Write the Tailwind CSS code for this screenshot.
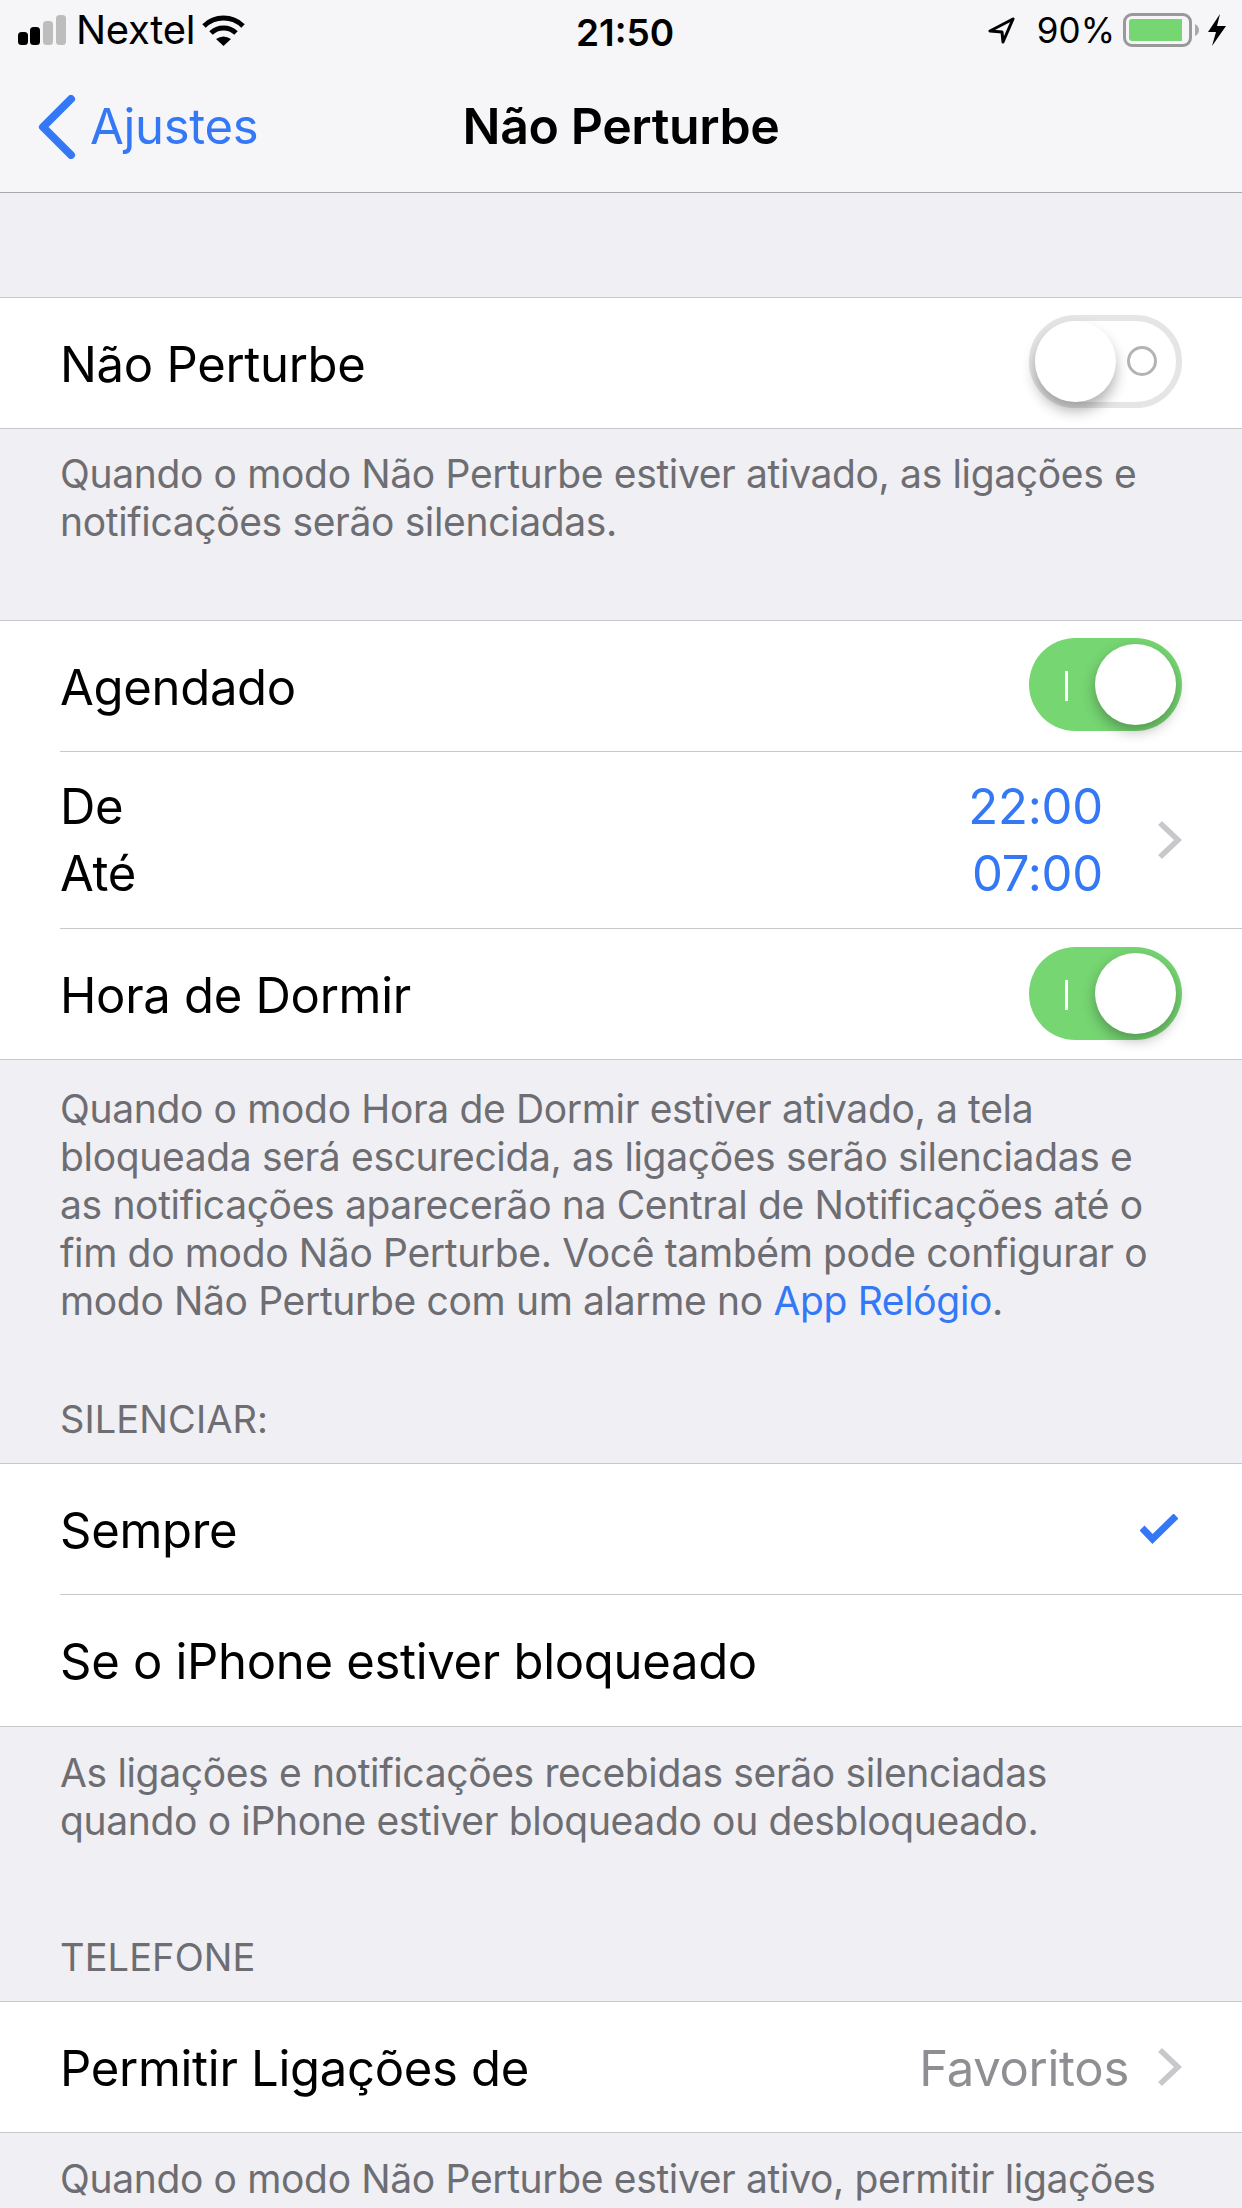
<!DOCTYPE html>
<html><head><meta charset="utf-8"><script src="https://cdn.jsdelivr.net/npm/@tailwindcss/browser@4"></script></head>
<body class="m-0">
<div class="w-[1242px] h-[2208px] overflow-hidden bg-[#efeff4] font-['Inter','Liberation_Sans',sans-serif] text-black text-[49px] tracking-[-0.3px]">
  <header class="h-[193px] bg-[#f6f6f9] border-b border-b-[#a9a9ad] flex flex-col">
    <div class="h-[60px] pl-[18px] pr-[16px] relative flex items-center justify-between text-[35px] tracking-normal">
      <div class="flex items-center">
        <svg width="48" height="30" viewBox="0 0 48 30"><rect x="0" y="17" width="10" height="13" rx="3.5" fill="#000"/><rect x="12" y="12" width="10" height="18" rx="3.5" fill="#000"/><rect x="25" y="6" width="10" height="24" rx="3.5" fill="#bdbdbd"/><rect x="38" y="0" width="10" height="30" rx="3.5" fill="#bdbdbd"/></svg>
        <span class="ml-[10px] text-[40px] tracking-[-0.3px]">Nextel</span>
        <svg class="ml-[7px]" width="43" height="31" viewBox="0 0 43 31"><path d="M2 11 A28 28 0 0 1 41 11" fill="none" stroke="#000" stroke-width="5"/><path d="M9 18 A18 18 0 0 1 34 18" fill="none" stroke="#000" stroke-width="5"/><path d="M14 24 Q21.500 19 29 24 L21.500 31 Z" fill="#000"/></svg>
      </div>
      <span class="absolute left-[576px] top-[5px] font-semibold text-[37px]">21:50</span>
      <div class="flex items-center">
        <svg width="27" height="27" viewBox="0 0 27 27"><path d="M25 2 L2 14 L14 15 L15 25 Z" fill="none" stroke="#000" stroke-width="3" stroke-linejoin="round"/></svg>
        <span class="ml-[22px]">90%</span>
        <div class="ml-[8px] w-[69px] h-[34px] border-[3px] border-[#999] rounded-[9px] p-[3px]"><div class="w-[53px] h-full bg-[#76d672] rounded-l-[3px]"></div></div>
        <svg class="ml-[3px]" width="4" height="12" viewBox="0 0 4 12"><path d="M0 0 Q4 2 4 6 Q4 10 0 12 Z" fill="#aaa"/></svg>
        <svg class="ml-[9px]" width="18" height="32" viewBox="0 0 18 32"><path d="M12 0 L0 18 L8 18 L4 32 L18 12 L9 12 Z" fill="#000"/></svg>
      </div>
    </div>
    <div class="flex-1 relative flex items-center justify-center pt-[1px]">
      <div class="absolute left-[38px] top-[30px] flex items-center text-[#3478f6]">
        <svg width="38" height="64" viewBox="0 0 38 64"><path d="M33 4 L5 32 L33 60" fill="none" stroke="#3478f6" stroke-width="8" stroke-linecap="round" stroke-linejoin="round"/></svg>
        <span class="ml-[14px]">Ajustes</span>
      </div>
      <span class="font-semibold text-[50px] tracking-[-0.4px]">Não Perturbe</span>
    </div>
  </header>
  <main class="pt-[104px]">
    <section class="bg-white border-y border-[#c8c7cc] h-[132px] pl-[60px] pr-[60px] flex items-center justify-between">
      <span class="mt-[3px]">Não Perturbe</span>
      <div class="relative -mt-[3px] w-[153px] h-[93px] rounded-full border-[6px] border-[#e5e5e5]">
        <div class="absolute left-[0px] top-[0px] w-[81px] h-[81px] rounded-full bg-white shadow-[0_9px_14px_rgba(0,0,0,0.3)]"></div>
        <div class="absolute left-[92px] top-[25px] w-[30px] h-[30px] rounded-full border-[3px] border-[#b3b3b3]"></div>
      </div>
    </section>
    <p class="pt-[21px] pl-[60px] text-[39px] leading-[48px] text-[#6d6d72] h-[191px] tracking-[-0.35px]">Quando o modo Não Perturbe estiver ativado, as ligações e<br>notificações serão silenciadas.</p>
    <section class="bg-white border-y border-[#c8c7cc]">
      <div class="h-[130px] pl-[60px] pr-[60px] flex items-center justify-between">
        <span class="mt-[3px]">Agendado</span>
        <div class="relative -mt-[3px] w-[153px] h-[93px] rounded-full bg-[#76d672]">
          <div class="absolute left-[36px] top-[33px] w-[3px] h-[30px] bg-white"></div>
          <div class="absolute left-[66px] top-[6px] w-[81px] h-[81px] rounded-full bg-white shadow-[0_6px_14px_rgba(0,0,0,0.3)]"></div>
        </div>
      </div>
      <div class="ml-[60px] h-[178px] border-y border-[#c8c7cc] pr-[60px] flex items-center justify-between">
        <div class="leading-[67px]"><div>De</div><div>Até</div></div>
        <div class="flex items-center">
          <div class="leading-[67px] text-right text-[#3478f6] mr-[55px] tracking-[-0.2px]"><div>22:00</div><div>07:00</div></div>
          <svg width="24" height="38" viewBox="0 0 24 38"><path d="M2 2 L20 19 L2 36" fill="none" stroke="#c7c7cc" stroke-width="5.500"/></svg>
        </div>
      </div>
      <div class="h-[130px] pl-[60px] pr-[60px] flex items-center justify-between">
        <span class="mt-[3px]">Hora de Dormir</span>
        <div class="relative -mt-[1px] w-[153px] h-[93px] rounded-full bg-[#76d672]">
          <div class="absolute left-[36px] top-[33px] w-[3px] h-[30px] bg-white"></div>
          <div class="absolute left-[66px] top-[6px] w-[81px] h-[81px] rounded-full bg-white shadow-[0_6px_14px_rgba(0,0,0,0.3)]"></div>
        </div>
      </div>
    </section>
    <p class="pt-[25px] pl-[60px] text-[39px] leading-[48px] text-[#6d6d72] tracking-[-0.35px]">Quando o modo Hora de Dormir estiver ativado, a tela<br>bloqueada será escurecida, as ligações serão silenciadas e<br>as notificações aparecerão na Central de Notificações até o<br>fim do modo Não Perturbe. Você também pode configurar o<br>modo Não Perturbe com um alarme no <span class="text-[#3478f6]">App Relógio</span>.</p>
    <div class="h-[138px] pt-[70px] pl-[60px] text-[38px] leading-[48px] text-[#6d6d72] tracking-[0.1px]">SILENCIAR:</div>
    <section class="bg-white border-y border-[#c8c7cc]">
      <div class="h-[130px] pl-[60px] pr-[64px] flex items-center justify-between">
        <span class="mt-[3px]">Sempre</span>
        <svg width="38" height="30" viewBox="0 0 38 30"><path d="M2 14 L12.500 25 L36 2" fill="none" stroke="#3478f6" stroke-width="7"/></svg>
      </div>
      <div class="ml-[60px] h-[132px] border-t border-[#c8c7cc] flex items-center"><span class="mt-[3px]">Se o iPhone estiver bloqueado</span></div>
    </section>
    <p class="pt-[22px] pl-[60px] text-[39px] leading-[48px] text-[#6d6d72] tracking-[-0.35px]">As ligações e notificações recebidas serão silenciadas<br>quando o iPhone estiver bloqueado ou desbloqueado.</p>
    <div class="h-[156px] pt-[88px] pl-[60px] text-[38px] leading-[48px] text-[#6d6d72] tracking-[0.1px]">TELEFONE</div>
    <section class="bg-white border-y border-[#c8c7cc] h-[132px] pl-[60px] pr-[60px] flex items-center justify-between">
      <span class="mt-[3px]">Permitir Ligações de</span>
      <div class="flex items-center">
        <span class="mt-[3px] text-[#8e8e93] mr-[29px]">Favoritos</span>
        <svg width="24" height="38" viewBox="0 0 24 38"><path d="M2 2 L20 19 L2 36" fill="none" stroke="#c7c7cc" stroke-width="5.500"/></svg>
      </div>
    </section>
    <p class="pt-[22px] pl-[60px] text-[39px] leading-[48px] text-[#6d6d72] tracking-[-0.35px]">Quando o modo Não Perturbe estiver ativo, permitir ligações</p>
  </main>
</div>
</body></html>
